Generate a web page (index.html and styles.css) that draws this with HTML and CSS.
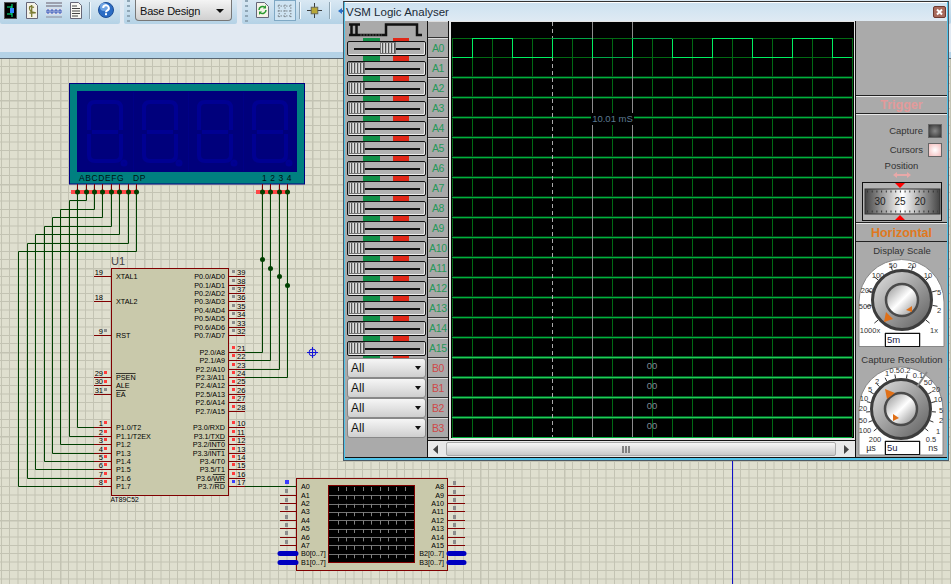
FILE: index.html
```html
<!DOCTYPE html>
<html lang="en">
<head>
<meta charset="utf-8">
<title>VSM Logic Analyser</title>
<link rel="stylesheet" href="styles.css">
</head>
<body>
<div class="app">
  <header class="chrome">
    <div class="toolbar">
      <div class="tgroup tgroup-a">
        <svg class="ico ico-a" viewBox="0 0 13 17"><rect x=".5" y=".5" width="12" height="16" fill="#000" stroke="#555"/><path d="M3 5h5M8 2v13M3 12h5" stroke="#0f8" fill="none"/><rect x="6" y="6" width="4" height="5" fill="#38f"/></svg>
        <svg class="ico ico-b" viewBox="0 0 12 17"><path d="M.5.5h8l3 3v13H.5z" fill="#f4f2e8" stroke="#667"/><path d="M8 5.5Q3 3 3.500 6.500T8 10.500 3.500 11M5.700 3v12" fill="none" stroke="#7a7a30" stroke-width="1.300"/></svg>
        <svg class="ico ico-c" viewBox="0 0 16 17"><path d="M0 1h16M0 4h16" stroke="#8a8a98" stroke-width="1.500"/><rect y="6" width="16" height="7" fill="#d8dde8"/><path d="M1 8h2v3H1zM5 8h2v3H5zM9 8h2v3H9zM13 8h2v3h-2z" fill="none" stroke="#3355bb"/><path d="M0 15h16" stroke="#8a8a98"/></svg>
        <svg class="ico ico-d" viewBox="0 0 12 17"><path d="M.5.5h8l3 3v13H.5z" fill="#f8f8f4" stroke="#667"/><path d="M2 4h5M2 6.500h8M2 9h8M2 11.500h8M2 14h6" stroke="#444"/></svg>
        <span class="tsep"></span>
        <svg class="ico ico-help" viewBox="0 0 16 16"><circle cx="8" cy="8" r="7.500" fill="#2a6cc4" stroke="#1c4e96"/><circle cx="6" cy="5" r="4" fill="#6ea4e4"/><path d="M5.200 6a2.800 2.800 0 1 1 4.200 2.400Q8 9.200 8 10.300" fill="none" stroke="#fff" stroke-width="2"/><rect x="7" y="11.200" width="2" height="2" fill="#fff"/></svg>
      </div>
      <div class="tgroup tgroup-b">
        <span class="grip"></span>
        <div class="design-select"><span>Base Design</span><i class="caret"></i></div>
      </div>
      <div class="tgroup tgroup-c">
        <span class="grip"></span>
        <svg class="ico ico-e" viewBox="0 0 13 16"><path d="M.5.5h8l4 4v11H.5z" fill="#f4f2e8" stroke="#667"/><path d="M3 8a3.500 3.500 0 0 1 6-2.500M10 8a3.500 3.500 0 0 1-6 2.500" fill="none" stroke="#2a9a30" stroke-width="1.500"/><path d="M10 3v3.500H7M3 13v-3.500h3" fill="#2a9a30"/></svg>
        <div class="grid-toggle"><svg viewBox="0 0 20 17"><path d="M2 3h16M2 8.500h16M2 14h16M3.500 1.500v14M10 1.500v14M16.500 1.500v14" stroke="#333" stroke-dasharray="1 2.200" fill="none"/></svg></div>
        <span class="tsep"></span>
        <svg class="ico ico-f" viewBox="0 0 16 16"><path d="M0 8h16M8 0v16" stroke="#333"/><rect x="4.500" y="4.500" width="7" height="7" fill="#b8a838" stroke="#665"/></svg>
        <span class="tsep"></span>
        <svg class="ico ico-g" viewBox="0 0 8 8"><path d="M0 4l4-3v2h4v2H4v2z" fill="#2a70c8"/></svg>
      </div>
    </div>
    <div class="ribbon"></div>
    <div class="strip"></div>
  </header>

  <svg class="canvas" viewBox="0 59 951 525" width="951" height="525">
    <defs>
      <pattern id="grid" patternUnits="userSpaceOnUse" x="-24" y="16" width="84" height="84">
        <rect width="84" height="84" fill="#dfdfcf"/>
        <path d="M8.500 0v84M17 0v84M25.500 0v84M33.500 0v84M42 0v84M50.500 0v84M59 0v84M67.500 0v84M75.500 0v84M0 8.500h84M0 17h84M0 25.500h84M0 33.500h84M0 42h84M0 50.500h84M0 59h84M0 67.500h84M0 75.500h84" stroke="#c3c3b3" fill="none"/>
        <path d="M0 0v84M0 0h84" stroke="#c3c3b3" stroke-width="3" fill="none"/>
      </pattern>
      <g id="digit" fill="none" stroke="#000092" stroke-width="4">
        <path d="M89 130V108Q89 102 95 102H115Q121 102 121 108V130M92 132H118M89 134V155Q89 161 95 161H115Q121 161 121 155V134"/>
        <circle cx="124" cy="163" r="1.500"/>
      </g>
    </defs>
    <rect x="0" y="59" width="951" height="525" fill="url(#grid)"/>
    <path class="cursor" d="M732.500 461V584"/>

    <g class="lcd">
      <rect x="69.500" y="83.500" width="235" height="100.500" fill="#008080" stroke="#000080"/>
      <rect x="77" y="91" width="220" height="81" fill="#00007c"/>
      <path d="M133.500 92v79M188.500 92v79M243.500 92v79" stroke="#000086"/>
      <use href="#digit"/><use href="#digit" x="55"/><use href="#digit" x="110"/><use href="#digit" x="165"/>
      <text class="lcd-t" x="79" y="180.500">ABCDEFG</text>
      <text class="lcd-t" x="133" y="180.500">DP</text>
      <text class="lcd-n" x="262" y="180.500">1234</text>
    </g>

    <path class="pin" d="M77.500 184v8M86.500 184v8M94.500 184v8M102.500 184v8M111.500 184v8M119.500 184v8M128.500 184v8M136.500 184v8M262.500 184v8M270.500 184v8M279.500 184v8M287.500 184v8"/>
    <path fill="#ff4848" d="M71 190h66v4H71zM256 190h32v4h-32z"/>
    <path class="wire" d="M77.500 192V427.500H94M86.500 192V200.500H69.500V436.500H94M94.500 192V209.500H60.500V444.500H94M102.500 192V217.500H52.500V453.500H94M111.500 192V226.500H44.500V461.500H94M119.500 192V234.500H35.500V469.500H94M128.500 192V243.500H27.500V478.500H94M136.500 192V251.500H18.500V486.500H94"/>
    <path class="wire" d="M262.500 192V352.500H245M270.500 192V360.500H245M279.500 192V369.500H245M287.500 192V377.500H245M245 486.500H280"/>
    <g class="dots">
      <circle cx="77.500" cy="192" r="2.500"/><circle cx="86.500" cy="192" r="2.500"/><circle cx="94.500" cy="192" r="2.500"/><circle cx="102.500" cy="192" r="2.500"/><circle cx="111.500" cy="192" r="2.500"/><circle cx="119.500" cy="192" r="2.500"/><circle cx="128.500" cy="192" r="2.500"/><circle cx="136.500" cy="192" r="2.500"/>
      <circle cx="262.500" cy="192" r="2.500"/><circle cx="270.500" cy="192" r="2.500"/><circle cx="279.500" cy="192" r="2.500"/><circle cx="287.500" cy="192" r="2.500"/>
      <circle cx="262.500" cy="259.500" r="2.500"/><circle cx="270.500" cy="268.500" r="2.500"/><circle cx="279.500" cy="276.500" r="2.500"/><circle cx="287.500" cy="285.500" r="2.500"/>
    </g>

    <g class="chip">
      <rect x="111.500" y="268.500" width="117" height="227" fill="#c9c9ab" stroke="#800000"/>
      <path class="pin" d="M94 276.500h17M94 301.500h17M94 335.500h17M94 377.500h17M94 385.500h17M94 394.500h17M94 427.500h17M94 436.500h17M94 444.500h17M94 453.500h17M94 461.500h17M94 469.500h17M94 478.500h17M94 486.500h17"/>
      <path class="pin" d="M229 276.500h16M229 285.500h16M229 293.500h16M229 301.500h16M229 310.500h16M229 318.500h16M229 327.500h16M229 335.500h16M229 352.500h16M229 360.500h16M229 369.500h16M229 377.500h16M229 385.500h16M229 394.500h16M229 402.500h16M229 411.500h16M229 427.500h16M229 436.500h16M229 444.500h16M229 453.500h16M229 461.500h16M229 469.500h16M229 478.500h16M229 486.500h16"/>
      <path fill="#8c8c8c" d="M104 329h3v3h-3zM104 388h3v3h-3zM232 270h3v3h-3zM232 279h3v3h-3zM232 287h3v3h-3zM232 295h3v3h-3zM232 304h3v3h-3zM232 312h3v3h-3zM232 321h3v3h-3zM232 329h3v3h-3z"/>
      <path fill="#ff3c3c" d="M104 371h3v3h-3zM104 380h3v3h-3zM104 421h3v3h-3zM104 430h3v3h-3zM104 438h3v3h-3zM104 447h3v3h-3zM104 455h3v3h-3zM104 463h3v3h-3zM104 472h3v3h-3zM104 480h3v3h-3zM232 346h3v3h-3zM232 354h3v3h-3zM232 363h3v3h-3zM232 371h3v3h-3zM232 380h3v3h-3zM232 388h3v3h-3zM232 396h3v3h-3zM232 405h3v3h-3zM232 421h3v3h-3zM232 430h3v3h-3zM232 438h3v3h-3zM232 447h3v3h-3zM232 455h3v3h-3zM232 463h3v3h-3zM232 472h3v3h-3z"/>
      <rect x="232" y="480" width="3" height="3" fill="#3a3cff"/>
      <text class="refdes" x="111" y="265">U1</text>
      <text class="part" x="110.500" y="502">AT89C52</text>
      <g class="lbl">
        <text x="116" y="279">XTAL1</text><text x="116" y="304">XTAL2</text><text x="116" y="338">RST</text>
        <text x="116" y="380" class="ovl">PSEN</text><text x="116" y="388">ALE</text><text x="116" y="397" class="ovl">EA</text>
        <text x="116" y="430">P1.0/T2</text><text x="116" y="439">P1.1/T2EX</text><text x="116" y="447">P1.2</text><text x="116" y="456">P1.3</text><text x="116" y="464">P1.4</text><text x="116" y="472">P1.5</text><text x="116" y="481">P1.6</text><text x="116" y="489">P1.7</text>
      </g>
      <g class="lbl lbl-r">
        <text x="225" y="279">P0.0/AD0</text><text x="225" y="288">P0.1/AD1</text><text x="225" y="296">P0.2/AD2</text><text x="225" y="304">P0.3/AD3</text><text x="225" y="313">P0.4/AD4</text><text x="225" y="321">P0.5/AD5</text><text x="225" y="330">P0.6/AD6</text><text x="225" y="338">P0.7/AD7</text>
        <text x="225" y="355">P2.0/A8</text><text x="225" y="363">P2.1/A9</text><text x="225" y="372">P2.2/A10</text><text x="225" y="380">P2.3/A11</text><text x="225" y="388">P2.4/A12</text><text x="225" y="397">P2.5/A13</text><text x="225" y="405">P2.6/A14</text><text x="225" y="414">P2.7/A15</text>
        <text x="225" y="430">P3.0/RXD</text><text x="225" y="439">P3.1/TXD</text><text x="225" y="447">P3.2/<tspan class="ovl">INT0</tspan></text><text x="225" y="456">P3.3/<tspan class="ovl">INT1</tspan></text><text x="225" y="464">P3.4/T0</text><text x="225" y="472">P3.5/T1</text><text x="225" y="481">P3.6/<tspan class="ovl">WR</tspan></text><text x="225" y="489">P3.7/<tspan class="ovl">RD</tspan></text>
      </g>
      <g class="num num-l">
        <text x="103" y="275">19</text><text x="103" y="300">18</text><text x="103" y="334">9</text><text x="103" y="376">29</text><text x="103" y="384">30</text><text x="103" y="393">31</text><text x="103" y="426">1</text><text x="103" y="435">2</text><text x="103" y="443">3</text><text x="103" y="452">4</text><text x="103" y="460">5</text><text x="103" y="468">6</text><text x="103" y="477">7</text><text x="103" y="485">8</text>
      </g>
      <g class="num">
        <text x="237" y="275">39</text><text x="237" y="284">38</text><text x="237" y="292">37</text><text x="237" y="300">36</text><text x="237" y="309">35</text><text x="237" y="317">34</text><text x="237" y="326">33</text><text x="237" y="334">32</text>
        <text x="237" y="351">21</text><text x="237" y="359">22</text><text x="237" y="368">23</text><text x="237" y="376">24</text><text x="237" y="384">25</text><text x="237" y="393">26</text><text x="237" y="401">27</text><text x="237" y="410">28</text>
        <text x="237" y="426">10</text><text x="237" y="435">11</text><text x="237" y="443">12</text><text x="237" y="452">13</text><text x="237" y="460">14</text><text x="237" y="468">15</text><text x="237" y="477">16</text><text x="237" y="485">17</text>
      </g>
    </g>

    <g class="marker" fill="none" stroke="#1414d8">
      <circle cx="312.500" cy="352.500" r="3.500"/>
      <path d="M307 352.500h11M312.500 347v11"/>
    </g>

    <g class="analyser">
      <rect x="296.500" y="478.500" width="151" height="92" fill="#c9c9ab" stroke="#800000"/>
      <rect x="328.500" y="485.500" width="86" height="77" fill="#000" stroke="#800000"/>
      <path d="M329 495.500h85M329 504.500h85M329 512.500h85M329 520.500h85M329 529.500h85M329 537.500h85M329 545.500h85M329 554.500h85" stroke="#747474"/>
      <path d="M338.500 487V562M346.500 487V562M354.500 487V562M363.500 487V562M371.500 487V562M380.500 487V562M388.500 487V562M396.500 487V562M405.500 487V562" stroke="#808080" stroke-dasharray="4 4.400"/>
      <path class="pin" d="M280 495.500h16M280 503.500h16M280 511.500h16M280 520.500h16M280 528.500h16M280 537.500h16M280 545.500h16M447 486.500h18M447 495.500h18M447 503.500h18M447 511.500h18M447 520.500h18M447 528.500h18M447 537.500h18M447 545.500h18"/>
      <path class="wire" d="M280 486.500h16"/>
      <path fill="#8c8c8c" d="M285 489h3v4h-3zM285 498h3v4h-3zM285 506h3v4h-3zM285 515h3v4h-3zM285 523h3v4h-3zM285 531h3v4h-3zM285 540h3v4h-3zM453 481h3v4h-3zM453 490h3v4h-3zM453 498h3v4h-3zM453 506h3v4h-3zM453 515h3v4h-3zM453 523h3v4h-3zM453 531h3v4h-3zM453 540h3v4h-3z"/>
      <rect x="285" y="480" width="4" height="4" fill="#3a3cff"/>
      <path class="bus" d="M280 553.500h16M280 562.500h16M449 553.500h15M449 562.500h15"/>
      <g class="lbl">
        <text x="301" y="489">A0</text><text x="301" y="498">A1</text><text x="301" y="506">A2</text><text x="301" y="514">A3</text><text x="301" y="523">A4</text><text x="301" y="531">A5</text><text x="301" y="540">A6</text><text x="301" y="548">A7</text><text x="301" y="556">B0[0..7]</text><text x="301" y="565">B1[0..7]</text>
      </g>
      <g class="lbl lbl-r">
        <text x="444" y="489">A8</text><text x="444" y="498">A9</text><text x="444" y="506">A10</text><text x="444" y="514">A11</text><text x="444" y="523">A12</text><text x="444" y="531">A13</text><text x="444" y="540">A14</text><text x="444" y="548">A15</text><text x="444" y="556">B2[0..7]</text><text x="444" y="565">B3[0..7]</text>
      </g>
    </g>
  </svg>

  <section class="window">
    <div class="titlebar">
      <span class="title">VSM Logic Analyser</span>
      <svg class="close" viewBox="0 0 13 12"><rect x=".5" y=".5" width="12" height="11" rx="1.500" fill="#a86a5c" stroke="#6e3a30"/><path d="M4 3.500l5 5M9 3.500l-5 5" stroke="#fff" stroke-width="2"/></svg>
    </div>
    <div class="body">
      <div class="sliders">
        <div class="wave-icon"><svg viewBox="0 0 75 16" width="75" height="16"><path d="M1 2.500h11M3.500 2.500v10M8.500 2.500v10M1 13h37V2.500h31V13h5" fill="none" stroke="#111" stroke-width="2.500"/><path d="M12 13h22" stroke="#555" stroke-dasharray="2 1"/></svg></div>
        <div class="rows">
          <div class="leds leds-first"><i class="g"></i><i class="r"></i></div>
          <div class="slider"><i class="thumb thumb-mid"></i></div><div class="leds"><i class="g"></i><i class="r"></i></div>
          <div class="slider"><i class="thumb"></i></div><div class="leds"><i class="g"></i><i class="r"></i></div>
          <div class="slider"><i class="thumb"></i></div><div class="leds"><i class="g"></i><i class="r"></i></div>
          <div class="slider"><i class="thumb"></i></div><div class="leds"><i class="g"></i><i class="r"></i></div>
          <div class="slider"><i class="thumb"></i></div><div class="leds"><i class="g"></i><i class="r"></i></div>
          <div class="slider"><i class="thumb"></i></div><div class="leds"><i class="g"></i><i class="r"></i></div>
          <div class="slider"><i class="thumb"></i></div><div class="leds"><i class="g"></i><i class="r"></i></div>
          <div class="slider"><i class="thumb"></i></div><div class="leds"><i class="g"></i><i class="r"></i></div>
          <div class="slider"><i class="thumb"></i></div><div class="leds"><i class="g"></i><i class="r"></i></div>
          <div class="slider"><i class="thumb"></i></div><div class="leds"><i class="g"></i><i class="r"></i></div>
          <div class="slider"><i class="thumb"></i></div><div class="leds"><i class="g"></i><i class="r"></i></div>
          <div class="slider"><i class="thumb"></i></div><div class="leds"><i class="g"></i><i class="r"></i></div>
          <div class="slider"><i class="thumb"></i></div><div class="leds"><i class="g"></i><i class="r"></i></div>
          <div class="slider"><i class="thumb"></i></div><div class="leds"><i class="g"></i><i class="r"></i></div>
          <div class="slider"><i class="thumb"></i></div><div class="leds"><i class="g"></i><i class="r"></i></div>
          <div class="slider"><i class="thumb"></i></div><div class="leds"><i class="g"></i><i class="r"></i></div>
        </div>
        <div class="combo"><span>All</span><i class="caret"></i></div>
        <div class="combo"><span>All</span><i class="caret"></i></div>
        <div class="combo"><span>All</span><i class="caret"></i></div>
        <div class="combo"><span>All</span><i class="caret"></i></div>
      </div>
      <div class="center">
        <div class="center-top">
          <div class="labels">
            <div class="lab lab-head"></div>
            <div class="lab">A0</div><div class="lab">A1</div><div class="lab">A2</div><div class="lab">A3</div><div class="lab">A4</div><div class="lab">A5</div><div class="lab">A6</div><div class="lab">A7</div><div class="lab">A8</div><div class="lab">A9</div><div class="lab">A10</div><div class="lab">A11</div><div class="lab">A12</div><div class="lab">A13</div><div class="lab">A14</div><div class="lab">A15</div>
            <div class="lab lab-b">B0</div><div class="lab lab-b">B1</div><div class="lab lab-b">B2</div><div class="lab lab-b">B3</div>
          </div>
          <div class="scope-wrap">
            <svg class="scope" viewBox="451 22 403 416" width="403" height="416" shape-rendering="crispEdges">
              <rect x="451" y="22" width="403" height="416" fill="#000"/>
              <path class="s-v" d="M452.500 38V437M472.500 38V437M492.500 38V437M512.500 38V437M532.500 38V437M572.500 38V437M612.500 38V437M652.500 38V437M672.500 38V437M692.500 38V437M712.500 38V437M732.500 38V437M752.500 38V437M772.500 38V437M792.500 38V437M812.500 38V437M832.500 38V437M852.500 38V437"/>
              <path class="s-a" d="M452 38.500H852M452 57.500H852"/>
              <path class="s-ag" d="M452 77.500H852M452 97.500H852M452 117.500H852M452 137.500H852M452 157.500H852M452 177.500H852M452 197.500H852M452 217.500H852M452 237.500H852M452 257.500H852M452 277.500H852M452 297.500H852M452 317.500H852M452 337.500H852"/>
              <path class="s-ac" d="M452 77.500H852M452 97.500H852M452 117.500H852M452 137.500H852M452 157.500H852M452 177.500H852M452 197.500H852M452 217.500H852M452 237.500H852M452 257.500H852M452 277.500H852M452 297.500H852M452 317.500H852M452 337.500H852M452 437.500H852"/>
              <path class="s-b" d="M452 357.500H852M452 377.500H852M452 397.500H852M452 417.500H852"/>
              <path class="s-bc" d="M452 357.500H852M452 377.500H852M452 397.500H852M452 417.500H852"/>
              <path class="s-cur" d="M592.500 22V437M632.500 22V437"/>
              <path class="s-dash" d="M552.500 22V437"/>
              <path class="s-dim" d="M552 38.500H592M592 57.500H632M632 38.500H672"/>
              <path class="s-wave" d="M452 57.500H472.500V38.500H512.500V57.500H552.500V38.500M592.500 38.500V57.500M632.500 57.500V38.500M672.500 38.500V57.500H712.500V38.500H752.500V57.500H792.500V38.500H832.500V57.500H852"/>
              <rect x="591" y="113" width="43" height="12" fill="#000"/>
              <text class="s-time" x="612.500" y="122">10.01 mS</text>
              <text class="s-val" x="652" y="369">00</text>
              <text class="s-val" x="652" y="389">00</text>
              <text class="s-val" x="652" y="409">00</text>
              <text class="s-val" x="652" y="429">00</text>
            </svg>
          </div>
        </div>
        <div class="scrollbar">
          <svg class="arrow" viewBox="0 0 6 9" width="6" height="9"><path d="M5 0v9L0 4.500z" fill="#444"/></svg>
          <div class="track"><svg class="tgrip" viewBox="0 0 9 7" width="9" height="7"><path d="M1 0v7M4 0v7M7 0v7" stroke="#666" stroke-width="1.500"/></svg></div>
          <svg class="arrow" viewBox="0 0 6 9" width="6" height="9"><path d="M1 0v9l5-4.500z" fill="#444"/></svg>
        </div>
      </div>
      <div class="controls">
        <div class="sec sec-top"></div>
        <div class="sec sec-head sec-trigger">Trigger</div>
        <div class="sec sec-capture">
          <div class="cap-row"><span>Capture</span><i class="led led-dark"></i></div>
          <div class="cap-row"><span>Cursors</span><i class="led led-pink"></i></div>
          <div class="pos-label">Position</div>
          <svg class="pos-arrows" viewBox="0 0 18 6" width="18" height="6"><path d="M0 3l4-3v2h10V0l4 3-4 3V4H4v2z" fill="#e8a8a8"/></svg>
          <svg class="pos-dial" viewBox="0 0 80 39" width="80" height="39">
            <defs><linearGradient id="drum"><stop offset="0" stop-color="#444"/><stop offset=".5" stop-color="#fff"/><stop offset="1" stop-color="#444"/></linearGradient></defs>
            <rect x=".5" y=".5" width="79" height="38" fill="#b4b4b4" stroke="#111"/>
            <rect x="3" y="7" width="75" height="25" fill="url(#drum)" stroke="#333"/>
            <path d="M5 9.500H76M5 29.500H76" stroke="#333" stroke-width="2" stroke-dasharray="1 3.700"/>
            <path d="M33 1h10l-5 5zM33 38h10l-5-5z" fill="#f00"/>
            <text class="dial-n" x="18" y="23">30</text><text class="dial-n" x="38" y="23">25</text><text class="dial-n" x="58" y="23">20</text>
          </svg>
        </div>
        <div class="sec sec-head sec-horizontal">Horizontal</div>
        <svg class="knobs" viewBox="856 243 92 215" width="92" height="215">
          <defs>
            <linearGradient id="kout" x1="0" y1="0" x2="1" y2="1"><stop offset="0" stop-color="#e4e4e4"/><stop offset="1" stop-color="#5a5a5a"/></linearGradient>
            <linearGradient id="kin" x1="0" y1="0" x2="1" y2="1"><stop offset="0" stop-color="#8a8a8a"/><stop offset=".5" stop-color="#fff"/><stop offset="1" stop-color="#808080"/></linearGradient>
          </defs>
          <text class="k-title" x="902" y="255">Display Scale</text>
          <path class="arch" d="M859 347.500V303A42.500 42.500 0 0 1 944 303V347.500H920V334H885V347.500Z"/>
          <g transform="translate(902 301)">
            <path class="tick" d="M-23.700 19.900L-27.600 23.100M-30.500 5.400L-35.500 6.300M-29.900-8L-34.800-9.300M-23.700-19.900L-27.600-23.100M-9.600-29.500L-11.100-34.200M23.700 19.900L27.600 23.100M30.500 5.400L35.500 6.300M29.900-8L34.800-9.300M23.700-19.900L27.600-23.100M9.600-29.500L11.100-34.200"/>
            <circle r="29.500" fill="url(#kout)" stroke="#3c3c3c" stroke-width="3"/>
            <circle r="16" fill="url(#kin)" stroke="#4a4a4a" stroke-width="2.500"/>
          </g>
          <path class="mark" d="M884 323l2-10 7 7zM906 311l6-4v6z"/>
          <g class="k-num">
            <text x="870" y="334">1000x</text><text x="865" y="310">500</text><text x="867" y="294">200</text><text x="878" y="279">100</text><text x="893" y="269">50</text><text x="912" y="269">20</text><text x="928" y="279">10</text><text x="939" y="296">5</text><text x="939" y="314">2</text><text x="934" y="334">1x</text>
          </g>
          <rect class="k-box" x="885.500" y="334.500" width="34" height="13"/>
          <text class="k-val" x="887" y="344">5m</text>

          <text class="k-title" x="902" y="364">Capture Resolution</text>
          <path class="arch" d="M859 456V410A42 42 0 0 1 943 410V456H920V442H885V456Z"/>
          <g transform="translate(901 410)">
            <path class="tick" d="M-5.400-30.500L-6.100-34.500M-14.100-27.600L-15.900-31.200M-21.500-22.300L-24.300-25.200M-27.100-15L-30.600-17M-30.300-6.400L-34.200-7.300M-30.900 2.700L-34.900 3M-28.700 11.600L-32.400 13.100M-24.100 19.500L-27.200 22M5.400-30.500L6.100-34.500M27.100-15L30.600-17M30.300-6.400L34.200-7.300M30.900 2.700L34.900 3M28.700 11.600L32.400 13.100M24.100 19.500L27.200 22"/>
            <circle r="29.500" fill="url(#kout)" stroke="#3c3c3c" stroke-width="3"/>
            <circle r="16" fill="url(#kin)" stroke="#4a4a4a" stroke-width="2.500"/>
          </g>
          <path d="M917 388l10-15" stroke="#888" stroke-width="2"/>
          <path class="mark" d="M885 390l10 4-8 6zM893 415l6 4-6 3z"/>
          <g class="k-num">
            <text x="875" y="443">200</text><text x="865" y="434">100</text><text x="863" y="424">50</text><text x="863" y="412">20</text><text x="864" y="402">10</text><text x="870" y="393">5</text><text x="877" y="385">2</text><text x="887" y="377">1</text><text x="900" y="374">0.50.2</text><text x="918" y="379">0.1</text><text x="928" y="386">50</text><text x="936" y="393">20</text><text x="938" y="403">10</text><text x="941" y="414">5</text><text x="941" y="424">2</text><text x="938" y="435">1</text><text x="931" y="443">0.5</text>
          </g>
          <text class="k-unit" x="871" y="452">µs</text><text class="k-unit" x="933" y="452">ns</text>
          <rect class="k-box" x="885.500" y="442.500" width="34" height="13"/>
          <text class="k-val" x="887" y="452">5u</text>
        </svg>
      </div>
    </div>
  </section>
</div>
</body>
</html>
```

FILE: styles.css
```css
* { box-sizing: border-box; }
html, body { margin: 0; padding: 0; }
body { font-family: "Liberation Sans", Arial, sans-serif; overflow: hidden; background: #dfdfcf; }
svg { display: block; }
i { display: block; }

.app { position: relative; width: 951px; height: 584px; overflow: hidden; display: flex; flex-direction: column; }

/* application chrome */
.chrome { flex: none; background: #e1e9f2; }
.toolbar { display: flex; height: 24px; gap: 4px; }
.tgroup { display: flex; align-items: flex-start; height: 24px; background: linear-gradient(#d9e8f3, #b4d2e6); border-radius: 0 0 2px 2px; }
.tgroup-a { width: 120px; padding: 2px 0 0 4px; }
.tgroup-b { width: 113px; padding-left: 3px; }
.tgroup-c { flex: 1; margin-left: 1px; padding-left: 3px; }
.grip { width: 3px; height: 24px; margin-right: 5px; background: repeating-linear-gradient(#8fa6b6 0 2px, transparent 2px 5px); }
.tsep { width: 2px; height: 17px; background: #8ea4b2; border-right: 1px solid #f2f8fc; }
.ico-a { width: 13px; height: 17px; }
.ico-b { width: 12px; height: 17px; margin-left: 9px; }
.ico-c { width: 16px; height: 17px; margin-left: 8px; }
.ico-d { width: 12px; height: 17px; margin-left: 8px; }
.tgroup-a .tsep { margin-left: 7px; }
.ico-help { width: 16px; height: 16px; margin-left: 7px; }
.design-select { display: flex; align-items: center; justify-content: space-between; width: 97px; height: 21px; padding: 1px 7px 0 4px; border: 1px solid #777; border-top: 0; border-radius: 0 0 4px 4px; background: linear-gradient(#f4f4f4, #d0d0d0); font-size: 11px; letter-spacing: -.2px; color: #111; }
.caret { width: 0; height: 0; border-left: 4px solid transparent; border-right: 4px solid transparent; border-top: 4px solid #111; }
.ico-e { width: 13px; height: 16px; margin: 2px 0 0 3px; }
.grid-toggle { width: 22px; height: 21px; margin-left: 5px; padding: 2px 1px; border: 1px solid #7fa8c4; background: #cfe4f2; }
.grid-toggle svg { width: 18px; height: 16px; }
.tgroup-c .tsep { margin: 2px 0 0 3px; }
.ico-f { width: 15px; height: 15px; margin: 3px 0 0 6px; }
.tgroup-c .ico-f + .tsep { margin-left: 7px; }
.ico-g { width: 8px; height: 8px; margin: 7px 0 0 7px; }
.ribbon { height: 28px; background: #e1e9f2; }
.strip { height: 7px; background: #b4d2e6; border-bottom: 1px solid #5a6670; }

/* schematic free canvas */
.canvas { flex: none; }
.canvas text { font-family: "Liberation Sans", Arial, sans-serif; fill: #000; }
.pin { stroke: #800000; fill: none; }
.wire { stroke: #004000; fill: none; }
.dots circle { fill: #004000; }
.cursor { stroke: #1010c8; fill: none; }
.bus { stroke: #0000c0; stroke-width: 5; stroke-linecap: round; fill: none; }
.canvas .lcd-t { font-size: 8.500px; letter-spacing: .6px; fill: #001010; }
.canvas .lcd-n { font-size: 8.500px; letter-spacing: 3.500px; fill: #001010; }
.canvas .refdes { font-size: 11px; fill: #444; }
.canvas .part { font-size: 6.800px; }
.lbl text { font-size: 7.200px; }
.lbl-r text { text-anchor: end; }
.num text { font-size: 7.500px; }
.num-l text { text-anchor: end; }
.ovl { text-decoration: overline; }

/* analyser window */
.window { position: absolute; left: 343px; top: 1px; width: 606px; height: 460px; display: flex; flex-direction: column; border: 1px solid #4c5a66; border-top-color: #333; background: #4fc4ea; padding: 0 1px 2px 1px; }
.titlebar { display: flex; align-items: center; justify-content: space-between; flex: none; height: 19px; border-top: 1px solid #fff; padding: 0 1px 0 1px; background: linear-gradient(#cde2f1, #dfeaf3); }
.title { font-size: 11.500px; color: #1b2a36; }
.close { width: 13px; height: 12px; }
.body { flex: 1; display: flex; min-height: 0; background: #aaa; border-bottom: 1px solid #111; }

.sliders { width: 83px; flex: none; border-right: 1px solid #111; }
.wave-icon { height: 17px; padding: 1px 0 0 3px; }
.rows { height: 320px; overflow: hidden; }
.leds { display: flex; height: 5px; padding-left: 18px; gap: 13px; }
.leds-first { height: 3px; }
.leds .g { width: 17px; background: #129048; }
.leds .r { width: 16px; background: #e02818; }
.slider { width: 79px; height: 15px; margin-left: 2px; padding: 0 0 0 1px; border: 1px solid #111; border-radius: 2px; box-shadow: inset -1px -1px 0 #eee; background: linear-gradient(#111, #111) center / 66px 2px no-repeat, #b2b2b2; }
.thumb { width: 16px; height: 12px; background: repeating-linear-gradient(90deg, #dcdcdc 0 1px, #555 1px 2px, #bbb 2px 3px); border: 1px solid #777; }
.thumb-mid { margin-left: 31px; }
.combo { display: flex; align-items: center; justify-content: space-between; width: 79px; height: 20px; margin-left: 2px; padding: 0 4px 0 3px; border: 1px solid #888; border-radius: 3px; background: linear-gradient(#f6f6f6, #cfcfcf); font-size: 12px; color: #111; }
.combo .caret { border-left-width: 3.500px; border-right-width: 3.500px; }

.center { width: 428px; flex: none; display: flex; flex-direction: column; border-right: 1px solid #111; }
.center-top { display: flex; height: 420px; border-bottom: 1px solid #111; }
.labels { width: 21px; flex: none; border-right: 1px solid #111; }
.lab { display: flex; align-items: center; justify-content: center; height: 20px; border-top: 1px solid #ddd; border-bottom: 1px solid #333; background: #a9a9a9; font-size: 10.500px; color: #27985a; white-space: nowrap; letter-spacing: -.3px; }
.lab-head { height: 17px; }
.lab-b { color: #cf4a4a; }
.scope-wrap { flex: 1; padding: 1px 0 0 2px; background: #e4e4e4; }
.scope text { font-family: "Liberation Sans", Arial, sans-serif; }
.s-v { stroke: #006a14; fill: none; }
.s-a { stroke: #006a14; fill: none; }
.s-ag { stroke: #003c14; stroke-width: 3; fill: none; }
.s-ac { stroke: #00b03c; fill: none; }
.s-b { stroke: #006024; stroke-width: 3; fill: none; }
.s-bc { stroke: #20cc54; fill: none; }
.s-cur { stroke: #8c8c8c; fill: none; }
.s-dash { stroke: #aaa; stroke-dasharray: 4 3; fill: none; }
.s-dim { stroke: #00a848; fill: none; }
.s-wave { stroke: #00f060; fill: none; }
.s-time { font-size: 9.500px; fill: #5c7a90; text-anchor: middle; }
.s-val { font-size: 9.500px; fill: #7d8a94; text-anchor: middle; }

.scrollbar { flex: 1; display: flex; align-items: center; gap: 7px; padding: 0 6px 0 5px; background: #e8e8e8; }
.track { flex: 1; display: flex; align-items: center; justify-content: center; height: 14px; border: 1px solid #aaa; border-radius: 2px; background: linear-gradient(#f6f6f6, #c8c8c8); }
.tgrip { margin-left: -30px; }

.controls { flex: 1; display: flex; flex-direction: column; min-width: 0; background: #aaa; }
.sec { border-bottom: 1px solid #222; border-top: 1px solid #e8e8e8; }
.sec-top { height: 75px; border-top: 0; }
.sec-head { display: flex; align-items: center; justify-content: center; font-size: 12.500px; font-weight: 700; }
.sec-trigger { height: 18px; color: #e39a9a; }
.sec-horizontal { height: 19px; color: #e0781e; }
.sec-capture { height: 110px; display: flex; flex-direction: column; align-items: center; padding-top: 9px; }
.cap-row { display: flex; align-items: center; justify-content: flex-end; gap: 5px; width: 100%; height: 14px; padding-right: 5px; margin-bottom: 5px; font-size: 9.500px; color: #333; }
.led { width: 14px; height: 14px; border: 1px solid #666; }
.led-dark { background: radial-gradient(circle, #888, #333); }
.led-pink { background: radial-gradient(circle, #fff, #f4bcbc); }
.pos-label { font-size: 9.500px; color: #333; line-height: 11px; margin-top: -2px; }
.pos-arrows { margin-top: 1px; }
.pos-dial { margin-top: 4px; }
.dial-n { font-size: 10px; fill: #222; text-anchor: middle; }
.knobs { flex: none; }
.knobs text { font-family: "Liberation Sans", Arial, sans-serif; }
.k-title { font-size: 9.500px; fill: #333; text-anchor: middle; }
.arch { fill: #fff; stroke: #888; }
.tick { stroke: #333; fill: none; }
.mark { fill: #e07018; }
.k-num text { font-size: 7.500px; fill: #333; text-anchor: middle; }
.k-unit { font-size: 9px; fill: #333; text-anchor: middle; }
.k-box { fill: #fff; stroke: #111; }
.k-val { font-size: 9.500px; fill: #224; }
```
